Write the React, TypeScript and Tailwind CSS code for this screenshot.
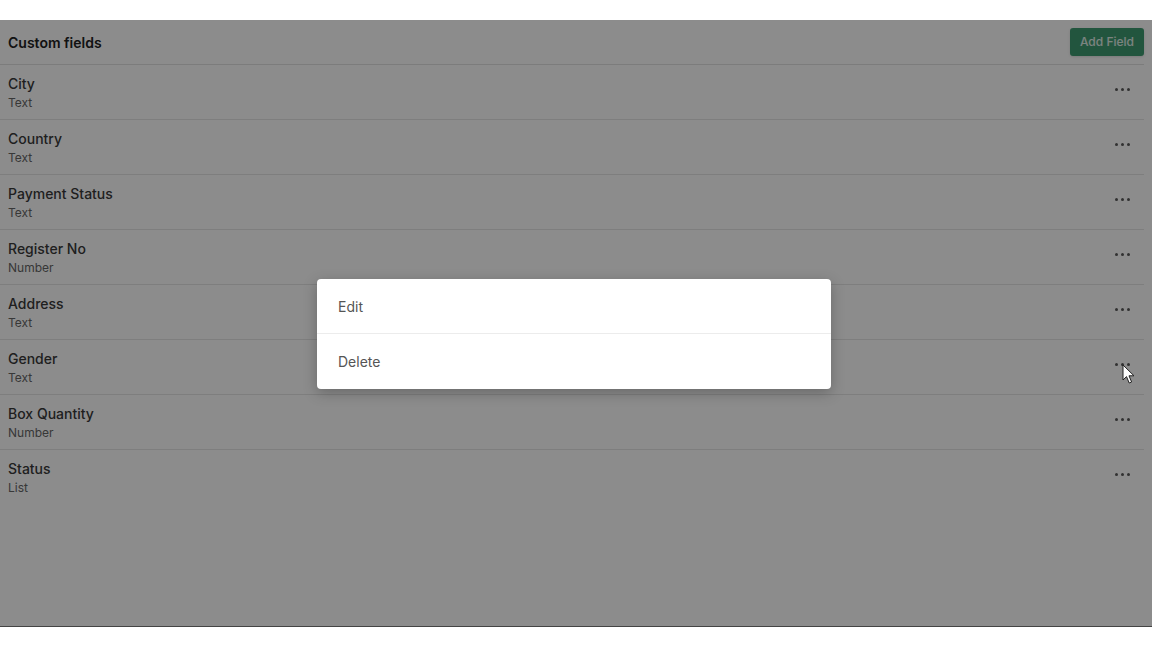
import { Fragment } from "react";

type Field = { name: string; type: string };

const fields: Field[] = [
  { name: "City", type: "Text" },
  { name: "Country", type: "Text" },
  { name: "Payment Status", type: "Text" },
  { name: "Register No", type: "Number" },
  { name: "Address", type: "Text" },
  { name: "Gender", type: "Text" },
  { name: "Box Quantity", type: "Number" },
  { name: "Status", type: "List" },
];

function Dots() {
  return (
    <div className="flex items-center gap-[3px] px-1">
      <span className="w-[3px] h-[3px] rounded-full bg-[#5a5a5a]" />
      <span className="w-[3px] h-[3px] rounded-full bg-[#5a5a5a]" />
      <span className="w-[3px] h-[3px] rounded-full bg-[#5a5a5a]" />
    </div>
  );
}

export default function App() {
  return (
    <div
      className="w-[1152px] h-[648px] bg-white pt-[20px] overflow-hidden"
      style={{ fontFamily: "Inter, 'Liberation Sans', sans-serif" }}
    >
      <div className="relative h-[607px] bg-white border-b border-[#444]">
        {/* Page content */}
        <div className="mr-2">
          <div className="flex items-center justify-between h-[45px] pl-2 border-b border-[#e2e2e2]">
            <h2 className="text-[14px] font-semibold text-[#222]">Custom fields</h2>
            <button className="h-[28px] px-[10px] rounded-[3px] bg-[#3f9c72] text-[12px] font-medium text-white/85 shadow-sm">
              Add Field
            </button>
          </div>

          {fields.map((f, i) => (
            <Fragment key={f.name}>
              <div
                className={`flex items-start justify-between h-[55px] pl-2 pt-[9px] pr-[10px] ${
                  i < fields.length - 1 ? "border-b border-[#e6e6e6]" : ""
                }`}
              >
                <div>
                  <div className="text-[14px] leading-[20px] font-medium text-[#3a3a3a]">{f.name}</div>
                  <div className="mt-[1px] text-[12px] leading-[16px] text-[#666]">{f.type}</div>
                </div>
                <div className="pt-[14px]">
                  <Dots />
                </div>
              </div>
            </Fragment>
          ))}
        </div>

        {/* Backdrop */}
        <div className="absolute inset-0 bg-black/45" />

        {/* Action menu */}
        <div className="absolute left-[317px] top-[259px] w-[514px] bg-white rounded-[4px] shadow-[0_4px_14px_rgba(0,0,0,0.25)]">
          <div className="h-[55px] flex items-center px-[21px] text-[14px] text-[#555] border-b border-[#ececec]">
            Edit
          </div>
          <div className="h-[55px] flex items-center px-[21px] text-[14px] text-[#555]">
            Delete
          </div>
        </div>

        {/* Mouse pointer */}
        <svg
          className="absolute left-[1122px] top-[344px]"
          width="14"
          height="21"
          viewBox="0 0 14 21"
        >
          <path
            d="M1 1 L1 16 L4.5 12.6 L7.2 19 L9.6 18 L7 11.8 L12 11.8 Z"
            fill="white"
            stroke="#222"
            strokeWidth="1"
            strokeLinejoin="round"
          />
        </svg>
      </div>
    </div>
  );
}
